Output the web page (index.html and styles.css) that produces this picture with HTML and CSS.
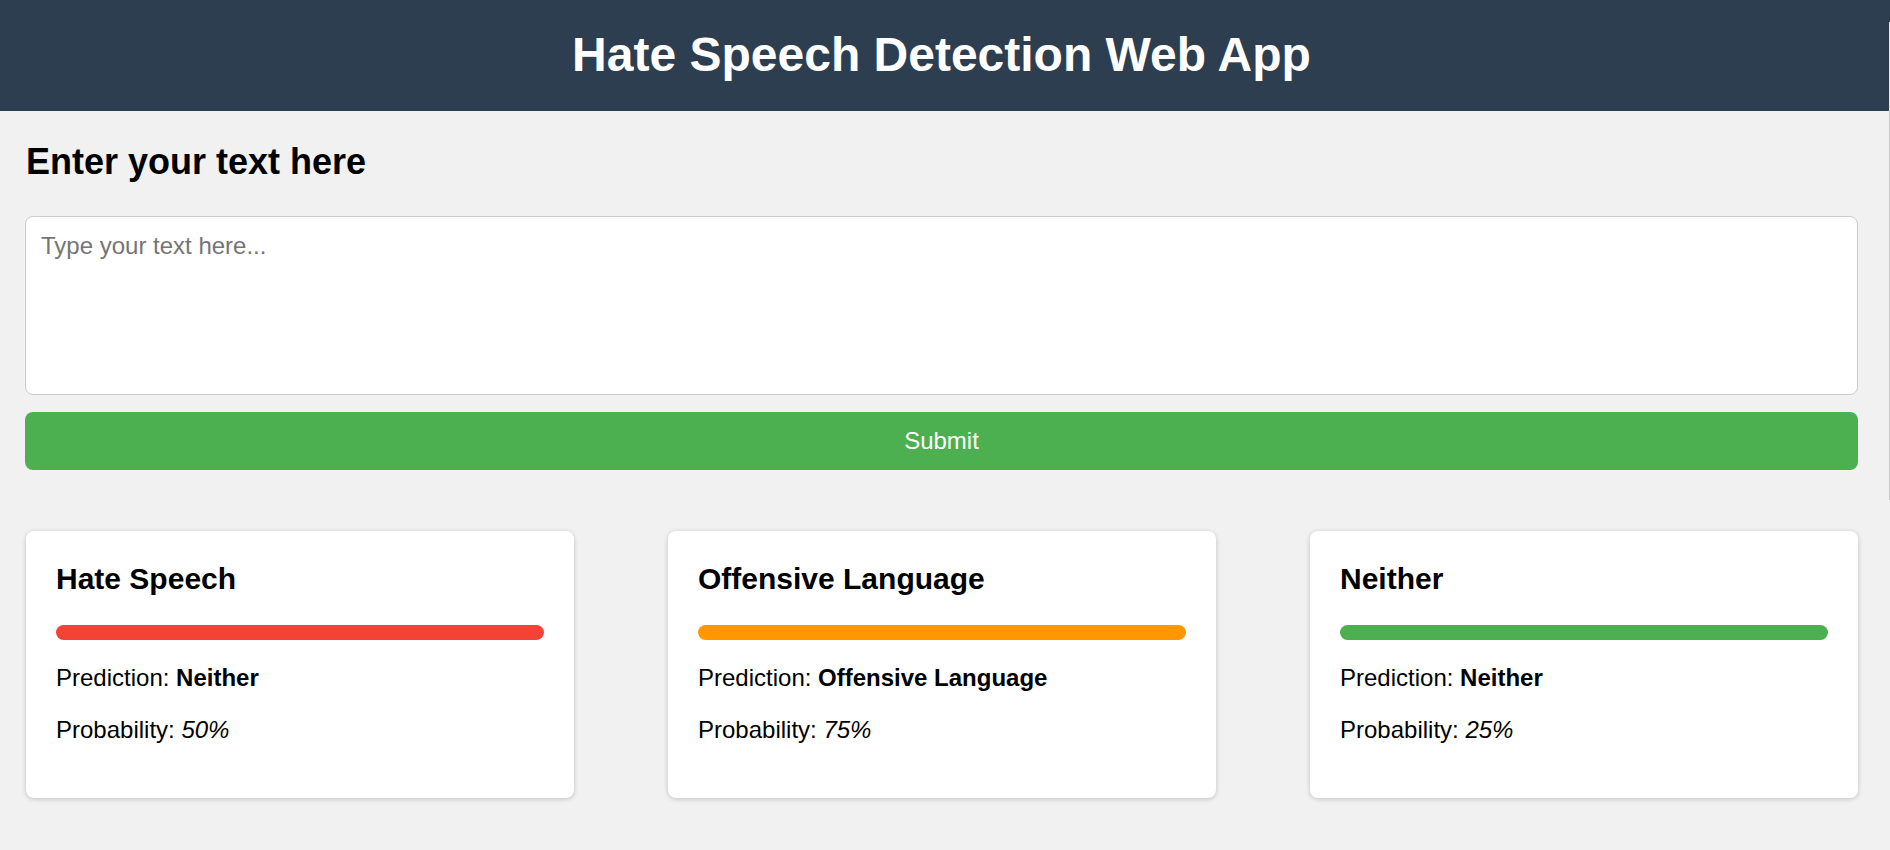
FILE: index.html
```html
<!DOCTYPE html>
<html lang="en">
<head>
<meta charset="utf-8">
<title>Hate Speech Detection Web App</title>
<link rel="stylesheet" href="styles.css">
</head>
<body>
<header class="app-header">
  <h1 class="app-title">Hate Speech Detection Web App</h1>
</header>
<main class="content">
  <h2 class="section-title">Enter your text here</h2>
  <form class="input-form">
    <textarea class="text-input" placeholder="Type your text here..."></textarea>
    <button type="button" class="submit-btn">Submit</button>
  </form>
  <section class="results">
    <div class="card">
      <h3 class="card-title">Hate Speech</h3>
      <div class="bar bar-red"></div>
      <p class="card-line">Prediction: <strong>Neither</strong></p>
      <p class="card-line">Probability: <em>50%</em></p>
    </div>
    <div class="card">
      <h3 class="card-title">Offensive Language</h3>
      <div class="bar bar-orange"></div>
      <p class="card-line">Prediction: <strong>Offensive Language</strong></p>
      <p class="card-line">Probability: <em>75%</em></p>
    </div>
    <div class="card">
      <h3 class="card-title">Neither</h3>
      <div class="bar bar-green"></div>
      <p class="card-line">Prediction: <strong>Neither</strong></p>
      <p class="card-line">Probability: <em>25%</em></p>
    </div>
  </section>
</main>
<div class="edge-line"></div>
</body>
</html>
```

FILE: styles.css
```css
* { box-sizing: border-box; }

html, body {
  margin: 0;
  padding: 0;
}

body {
  background: #f1f1f1;
  font-family: "Liberation Sans", Arial, sans-serif;
  color: #000;
  min-height: 850px;
}

.app-header {
  background: #2c3e50;
  height: 111px;
  padding: 27px 32px 29px 25px;
  text-align: center;
}

.app-title {
  margin: 0;
  color: #fff;
  font-size: 48px;
  line-height: 55px;
  font-weight: bold;
}

.content {
  padding: 0 32px 0 25px;
}

.section-title {
  margin: 30px 0 34px 1px;
  font-size: 36px;
  line-height: 41px;
  font-weight: bold;
}

.input-form {
  display: flex;
  flex-direction: column;
}

.text-input {
  display: block;
  width: 100%;
  height: 179px;
  padding: 15px;
  border: 1px solid #cccccc;
  border-radius: 8px;
  background: #fff;
  font-family: "Liberation Sans", Arial, sans-serif;
  font-size: 24px;
  line-height: 28px;
  resize: none;
  outline: none;
}

.text-input::placeholder {
  color: #757575;
}

.submit-btn {
  margin-top: 17px;
  height: 58px;
  width: 100%;
  border: none;
  border-radius: 8px;
  background: #4caf50;
  color: #fff;
  font-family: "Liberation Sans", Arial, sans-serif;
  font-size: 24px;
  cursor: pointer;
}

.results {
  display: flex;
  justify-content: space-between;
  margin-top: 61px;
  padding-left: 1px;
}

.card {
  width: 548px;
  background: #fff;
  border-radius: 8px;
  padding: 30px;
  box-shadow: 0 1px 5px rgba(0, 0, 0, 0.2);
}

.card-title {
  margin: 0 0 29px;
  font-size: 30px;
  line-height: 35px;
  font-weight: bold;
}

.bar {
  height: 15px;
  border-radius: 8px;
  width: 100%;
}

.bar-red { background: #f44336; }
.bar-orange { background: #ff9800; }
.bar-green { background: #4caf50; }

.card-line {
  margin: 24px 0;
  font-size: 24px;
  line-height: 28px;
}

.card-line strong { font-weight: bold; }
.card-line em { font-style: italic; }

.edge-line {
  position: fixed;
  right: 0;
  top: 22px;
  width: 1px;
  height: 478px;
  background: linear-gradient(to bottom, #e6e6e6 0, #e6e6e6 89px, #c8c8c8 89px, #c8c8c8 100%);
}
```
